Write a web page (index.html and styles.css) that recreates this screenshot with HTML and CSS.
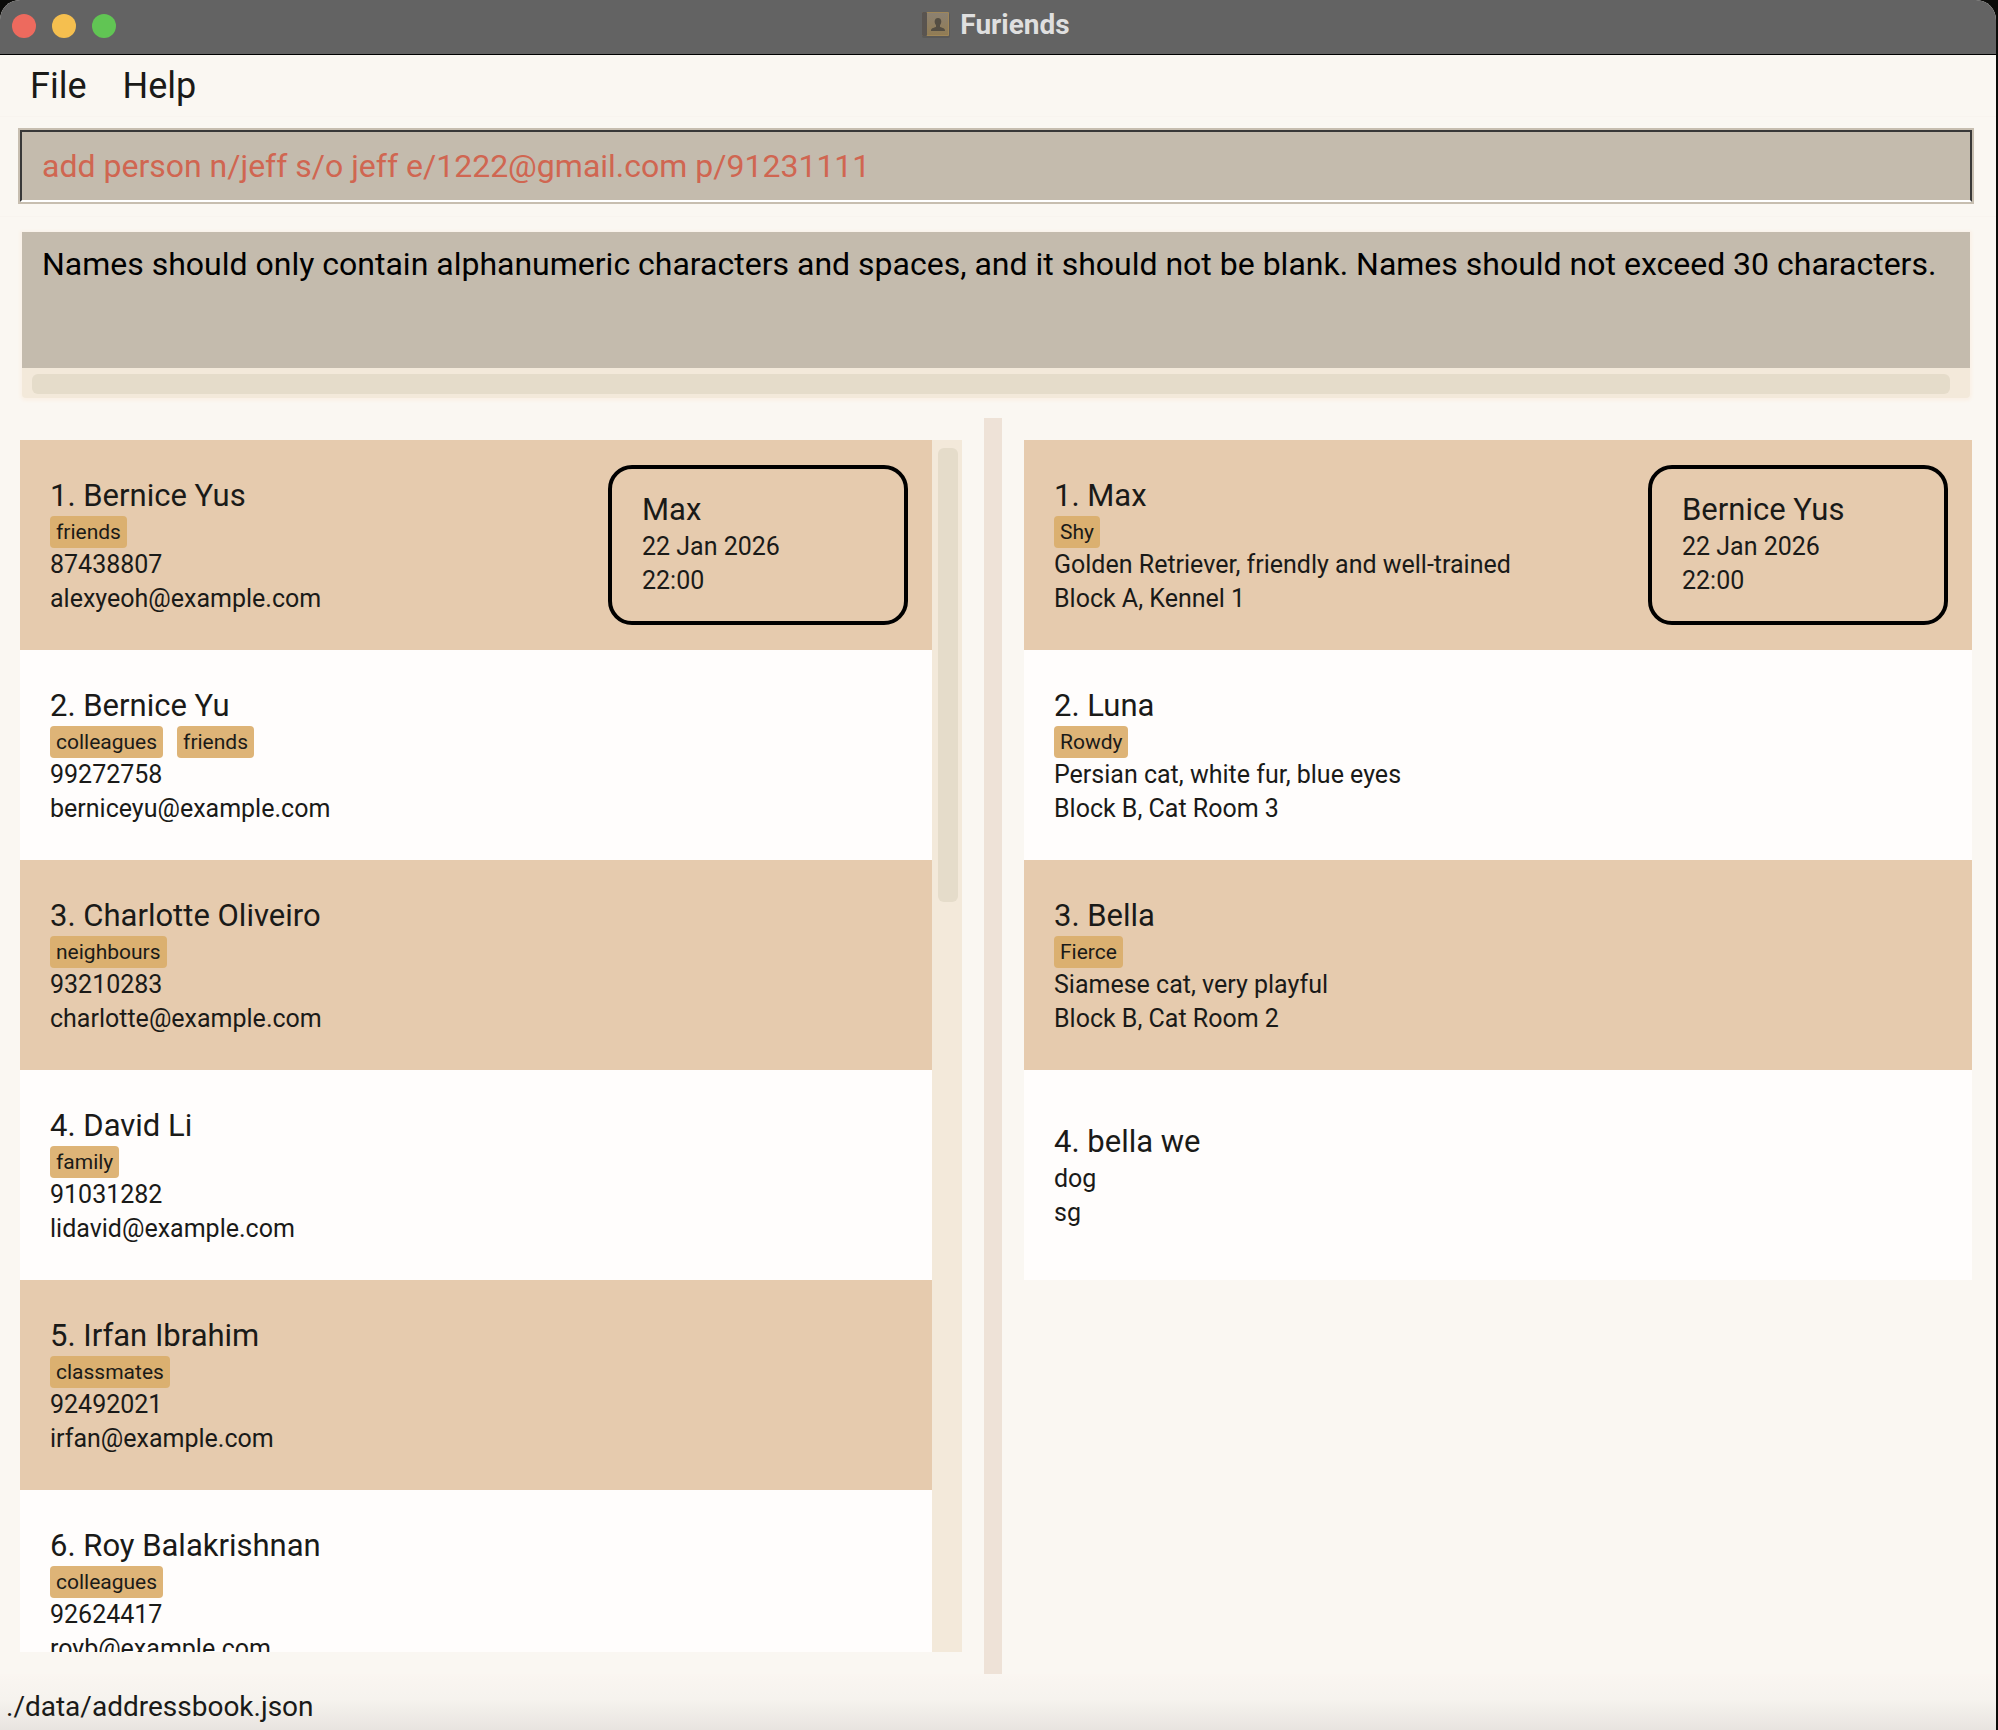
FILE: index.html
```html
<!DOCTYPE html>
<html lang="en">
<head>
<meta charset="utf-8">
<title>Furiends</title>
<link rel="stylesheet" href="styles.css">
</head>
<body>
<div class="window">
  <header class="titlebar">
    <div class="lights">
      <button class="light light-close" aria-label="Close"></button>
      <button class="light light-minimise" aria-label="Minimise"></button>
      <button class="light light-zoom" aria-label="Zoom"></button>
    </div>
    <h1 class="title">
      <svg class="title-icon" viewBox="0 0 28 26" aria-hidden="true">
        <defs>
          <linearGradient id="cover" x1="0" y1="0" x2="0" y2="1">
            <stop offset="0" stop-color="#8c8171"/>
            <stop offset="1" stop-color="#917c54"/>
          </linearGradient>
        </defs>
        <rect x="0" y="1" width="28" height="25" rx="2" fill="#5a5957"/>
        <rect x="0" y="0" width="27" height="24" rx="1" fill="#a08758"/>
        <rect x="0" y="0" width="5" height="24" rx="1" fill="#595450"/>
        <rect x="5" y="1" width="21" height="22" fill="url(#cover)"/>
        <path d="M9 19c0-3 2-3 5-4v-2c-2-2-2-7 2-7s4 5 2 7v2c3 1 5 1 5 4z" fill="#544e43"/>
      </svg>
      <span>Furiends</span>
    </h1>
  </header>

  <nav class="menubar">
    <button class="menu">File</button>
    <button class="menu">Help</button>
  </nav>

  <div class="command">
    <input class="command-input" type="text" aria-label="Command" value="add person n/jeff s/o jeff e/1222@gmail.com p/91231111">
  </div>

  <div class="result">
    <div class="result-box">
      <p class="result-text" role="status">Names should only contain alphanumeric characters and spaces, and it should not be blank. Names should not exceed 30 characters.</p>
      <div class="hscroll"><div class="thumb"></div></div>
    </div>
  </div>

  <main class="split">
    <section class="pane" aria-label="Persons">
      <ul class="list">
        <li class="card">
          <div class="details">
            <h2 class="name">1. Bernice Yus</h2>
            <div class="tags"><span class="tag">friends</span></div>
            <p class="line">87438807</p>
            <p class="line">alexyeoh@example.com</p>
          </div>
          <div class="booking">
            <h3 class="name">Max</h3>
            <p class="line">22 Jan 2026</p>
            <p class="line">22:00</p>
          </div>
        </li>
        <li class="card">
          <div class="details">
            <h2 class="name">2. Bernice Yu</h2>
            <div class="tags"><span class="tag">colleagues</span><span class="tag">friends</span></div>
            <p class="line">99272758</p>
            <p class="line">berniceyu@example.com</p>
          </div>
        </li>
        <li class="card">
          <div class="details">
            <h2 class="name">3. Charlotte Oliveiro</h2>
            <div class="tags"><span class="tag">neighbours</span></div>
            <p class="line">93210283</p>
            <p class="line">charlotte@example.com</p>
          </div>
        </li>
        <li class="card">
          <div class="details">
            <h2 class="name">4. David Li</h2>
            <div class="tags"><span class="tag">family</span></div>
            <p class="line">91031282</p>
            <p class="line">lidavid@example.com</p>
          </div>
        </li>
        <li class="card">
          <div class="details">
            <h2 class="name">5. Irfan Ibrahim</h2>
            <div class="tags"><span class="tag">classmates</span></div>
            <p class="line">92492021</p>
            <p class="line">irfan@example.com</p>
          </div>
        </li>
        <li class="card">
          <div class="details">
            <h2 class="name">6. Roy Balakrishnan</h2>
            <div class="tags"><span class="tag">colleagues</span></div>
            <p class="line">92624417</p>
            <p class="line">royb@example.com</p>
          </div>
        </li>
      </ul>
      <div class="vscroll"><div class="thumb"></div></div>
    </section>

    <div class="divider"></div>

    <section class="pane pane-pets" aria-label="Pets">
      <ul class="list">
        <li class="card">
          <div class="details">
            <h2 class="name">1. Max</h2>
            <div class="tags"><span class="tag">Shy</span></div>
            <p class="line">Golden Retriever, friendly and well-trained</p>
            <p class="line">Block A, Kennel 1</p>
          </div>
          <div class="booking">
            <h3 class="name">Bernice Yus</h3>
            <p class="line">22 Jan 2026</p>
            <p class="line">22:00</p>
          </div>
        </li>
        <li class="card">
          <div class="details">
            <h2 class="name">2. Luna</h2>
            <div class="tags"><span class="tag">Rowdy</span></div>
            <p class="line">Persian cat, white fur, blue eyes</p>
            <p class="line">Block B, Cat Room 3</p>
          </div>
        </li>
        <li class="card">
          <div class="details">
            <h2 class="name">3. Bella</h2>
            <div class="tags"><span class="tag">Fierce</span></div>
            <p class="line">Siamese cat, very playful</p>
            <p class="line">Block B, Cat Room 2</p>
          </div>
        </li>
        <li class="card">
          <div class="details">
            <h2 class="name">4. bella we</h2>
            <p class="line">dog</p>
            <p class="line">sg</p>
          </div>
        </li>
      </ul>
    </section>
  </main>

  <footer class="statusbar">./data/addressbook.json</footer>
</div>
</body>
</html>
```
FILE: styles.css
```css
* {
  box-sizing: border-box;
  margin: 0;
  padding: 0;
}

body {
  background: #0b0b09;
  color: #1a1a18;
  font-family: Roboto, "Liberation Sans", sans-serif;
  font-size: 25px;
  line-height: 34px;
}

button,
input {
  font: inherit;
  color: inherit;
  border: 0;
  background: none;
}

.window {
  display: flex;
  flex-direction: column;
  height: 100vh;
  margin-right: 2px;
  overflow: hidden;
  border-radius: 20px 20px 0 0;
  background: #faf7f2;
}

/* Title bar */
.titlebar {
  display: grid;
  grid-template-columns: 1fr auto 1fr;
  align-items: center;
  flex: none;
  height: 55px;
  padding: 0 16px 2px 12px;
  background: #636363;
  border-bottom: 1px solid #000;
}

.lights {
  display: flex;
  gap: 16px;
}

.light {
  width: 24px;
  height: 24px;
  border-radius: 50%;
}

.light-close { background: #ed6a5e; }
.light-minimise { background: #f5bf4f; }
.light-zoom { background: #61c554; }

.title {
  display: flex;
  align-items: center;
  gap: 10px;
  padding-bottom: 2px;
  color: #dfdfdf;
  font-size: 28px;
  font-weight: 700;
}

.title-icon {
  width: 28px;
  height: 26px;
}

/* Menu and command entry */
.menubar {
  display: flex;
  flex: none;
  gap: 36px;
  height: 62px;
  padding: 9px 30px;
  border-bottom: 1px solid #f8f4ef;
}

.menu {
  font-size: 36px;
  line-height: 44px;
}

.command {
  flex: none;
  padding: 13px 24px 14px 20px;
}

.command-input {
  display: block;
  width: 100%;
  height: 72px;
  padding: 0 20px;
  border: 2px solid #383838;
  border-bottom-color: #fff;
  box-shadow: 0 0 0 2px #c7beb0;
  background: #c4bbad;
  color: #d06651;
  font-size: 32px;
}

/* Result display */
.result {
  flex: none;
  padding: 15px 26px 20px 22px;
  border-top: 1px solid #f8f4ef;
}

.result-box {
  border-radius: 0 0 4px 4px;
  overflow: hidden;
  background: #f3e9da;
  box-shadow: 0 1px 3px 2px #faf1e7;
}

.result-text {
  height: 136px;
  padding: 12px 0 0 20px;
  overflow: hidden;
  background: #c4bbad;
  color: #000;
  font-size: 32px;
  line-height: 40px;
  white-space: nowrap;
}

.hscroll {
  padding: 6px 20px 4px 10px;
}

.thumb {
  height: 20px;
  border-radius: 6px;
  background: #e5dcca;
}

/* Lists */
.split {
  display: grid;
  grid-template-columns: 984fr 18px 994fr;
  flex: 1;
  min-height: 0;
}

.divider {
  background: #eee2d7;
}

.pane {
  display: flex;
  min-width: 0;
  min-height: 0;
  padding: 22px 22px 22px 20px;
}

.pane-pets {
  padding: 22px 24px 22px 22px;
}

.list {
  flex: 1;
  min-width: 0;
  overflow: hidden;
  list-style: none;
}

.vscroll {
  flex: none;
  width: 30px;
  padding: 8px 4px 8px 6px;
  background: #f3e9da;
}

.vscroll .thumb {
  height: 38%;
}

.card {
  display: flex;
  align-items: center;
  justify-content: space-between;
  height: 210px;
  padding: 0 24px 0 30px;
  background: #fffdfc;
}

.card:nth-child(odd) {
  background: #e6cbae;
}

.details {
  padding-top: 2px;
}

.name {
  font-size: 31px;
  font-weight: 400;
  line-height: 40px;
}

.tags {
  display: flex;
  gap: 14px;
}

.tag {
  padding: 0 6px;
  border-radius: 4px;
  background: #deb477;
  font-size: 21px;
  line-height: 32px;
}

.card:nth-child(odd) .tag {
  background: #dbb070;
}

.booking {
  display: flex;
  flex-direction: column;
  justify-content: center;
  width: 300px;
  height: 160px;
  padding: 0 30px 2px;
  border: 4px solid #000;
  border-radius: 24px;
}

/* Status bar */
.statusbar {
  flex: none;
  height: 56px;
  padding: 13px 6px 3px;
  background: linear-gradient(#faf6f1, #f6f3ee 45%, #e8e4e0);
  font-size: 28px;
  line-height: 40px;
}
```
